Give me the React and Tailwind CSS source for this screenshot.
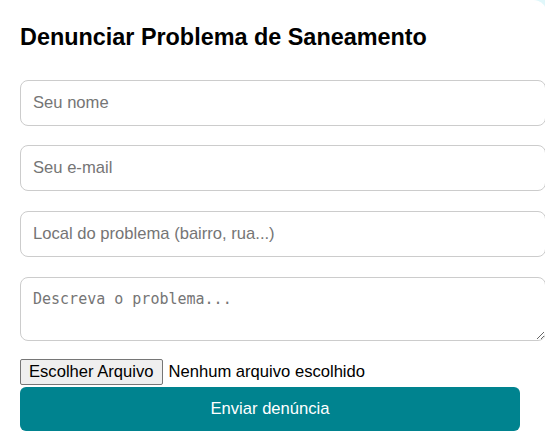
export default function App() {
  return (
    <div className="w-[545px] h-[448px] overflow-hidden bg-[#e0f7fa] font-['Liberation_Sans',Arial,sans-serif]">
      <div className="w-[547px] h-[470px] bg-white rounded-tr-[14px] pl-5 pt-[23px] flex flex-col">
        <h2 className="text-[23.4px] leading-[28px] font-bold text-black m-0">
          Denunciar Problema de Saneamento
        </h2>
        <input
          type="text"
          placeholder="Seu nome"
          className="mt-[29px] w-[526px] h-[46px] px-3 border border-[#cccccc] rounded-[8px] text-[16.6px] text-black placeholder:text-[#757575] outline-none bg-white"
        />
        <input
          type="email"
          placeholder="Seu e-mail"
          className="mt-[19px] w-[526px] h-[46px] px-3 border border-[#cccccc] rounded-[8px] text-[16.6px] text-black placeholder:text-[#757575] outline-none bg-white"
        />
        <input
          type="text"
          placeholder="Local do problema (bairro, rua...)"
          className="mt-[20px] w-[526px] h-[46px] px-3 border border-[#cccccc] rounded-[8px] text-[16.6px] text-black placeholder:text-[#757575] outline-none bg-white"
        />
        <textarea
          placeholder="Descreva o problema..."
          className="mt-[20px] w-[526px] h-[64px] px-3 py-[12px] border border-[#cccccc] rounded-[8px] text-[15px] leading-[18px] font-['DejaVu_Sans_Mono',monospace] text-black placeholder:text-[#757575] outline-none bg-white resize-y"
        />
        <div className="mt-[18px] flex items-center h-[26px]">
          <span className="h-[26px] flex items-center px-[8px] bg-[#efefef] border border-[#767676] rounded-[2px] text-[16.6px] text-black">
            Escolher Arquivo
          </span>
          <span className="ml-[6px] text-[16.6px] text-black">Nenhum arquivo escolhido</span>
        </div>
        <button className="mt-[2px] w-[500px] h-[44px] bg-[#00838f] text-white text-[16.6px] rounded-[6px] flex items-center justify-center">
          Enviar denúncia
        </button>
      </div>
    </div>
  );
}
